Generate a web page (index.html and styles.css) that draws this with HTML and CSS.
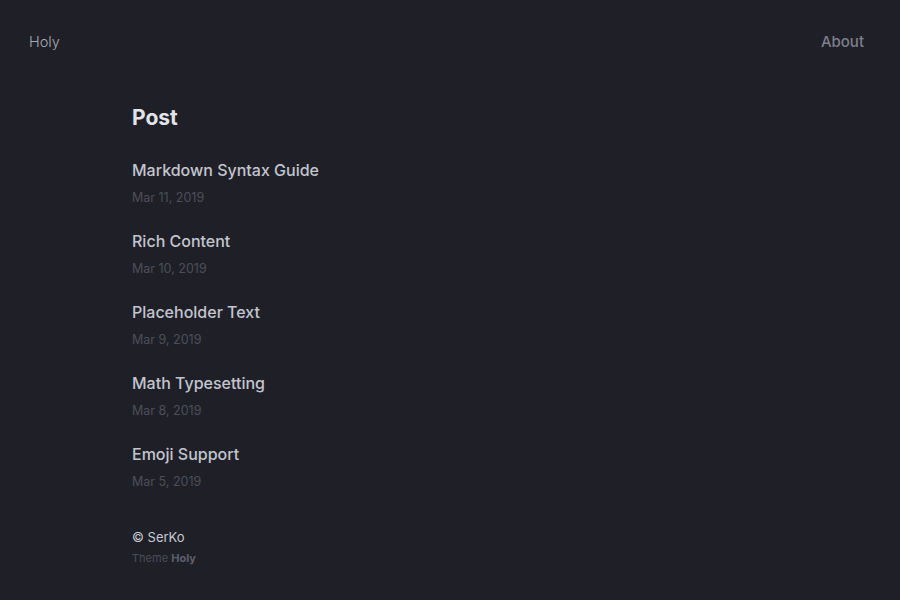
FILE: index.html
```html
<!DOCTYPE html>
<html>
<head>
<meta charset="utf-8">
<link rel="stylesheet" href="styles.css">
</head>
<body>
<header class="header">
  <a class="logo" href="#">Holy</a>
  <nav class="nav"><a href="#">About</a></nav>
</header>
<main class="main">
  <h1 class="page-title">Post</h1>
  <ul class="posts">
    <li class="post"><a class="post-title" href="#">Markdown Syntax Guide</a><time class="post-date">Mar 11, 2019</time></li>
    <li class="post"><a class="post-title" href="#">Rich Content</a><time class="post-date">Mar 10, 2019</time></li>
    <li class="post"><a class="post-title" href="#">Placeholder Text</a><time class="post-date">Mar 9, 2019</time></li>
    <li class="post"><a class="post-title" href="#">Math Typesetting</a><time class="post-date">Mar 8, 2019</time></li>
    <li class="post"><a class="post-title" href="#">Emoji Support</a><time class="post-date">Mar 5, 2019</time></li>
  </ul>
  <footer class="footer">
    <div class="copy">© SerKo</div>
    <div class="theme">Theme <b>Holy</b></div>
  </footer>
</main>
</body>
</html>
```
FILE: styles.css
```css
html, body {
  margin: 0;
  padding: 0;
  background: #1f2027;
  font-family: Inter, "Noto Sans", sans-serif;
  height: 100%;
}
a { text-decoration: none; }
.header {
  display: flex;
  justify-content: space-between;
  align-items: center;
  padding: 30px 36px 0 29px;
  height: 22px;
}
.logo {
  font-size: 14.5px;
  font-weight: 300;
  color: #a9abb5;
}
.nav a {
  font-size: 15px;
  font-weight: 500;
  color: #7d7f8b;
}
.main {
  padding: 0 132px;
}
.page-title {
  margin: 52px 0 0;
  font-size: 21px;
  font-weight: 700;
  color: #e3e4ea;
  line-height: 28px;
}
.posts {
  list-style: none;
  margin: 0;
  padding: 0;
  margin-top: 27px;
}
.post {
  display: flex;
  flex-direction: column;
  height: 71px;
}
.post-title {
  font-size: 16px;
  font-weight: 500;
  color: #c3c5cf;
  line-height: 22px;
}
.post-date {
  margin-top: 8px;
  font-size: 12.5px;
  color: #4c4e59;
  line-height: 18px;
}
.footer {
  margin-top: 14px;
}
.copy {
  font-size: 13px;
  color: #c9cad2;
  line-height: 18px;
}
.theme {
  margin-top: 5px;
  font-size: 11px;
  color: #4a4c57;
  line-height: 14px;
}
.theme b { color: #5d5f6b; font-weight: 700; }
```
